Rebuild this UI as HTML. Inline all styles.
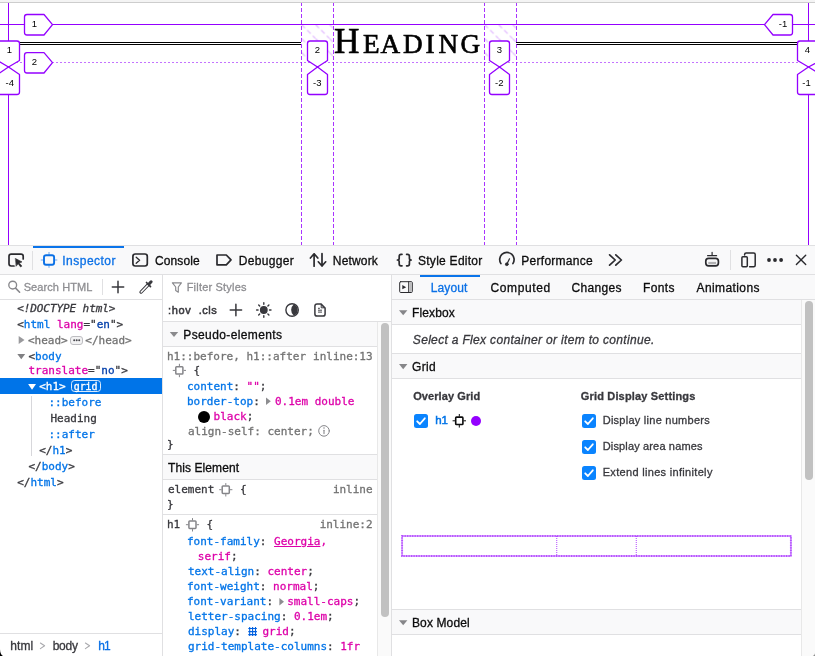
<!DOCTYPE html>
<html lang="en"><head><meta charset="utf-8"><title>Heading - Inspector</title>
<style>
html,body{margin:0;padding:0;}
body{width:815px;height:656px;position:relative;overflow:hidden;background:#fff;font-family:"Liberation Sans",sans-serif;font-size:11px;color:#0c0c0d;}
.abs,.t,#page,#toolbox div,#toolbox svg{position:absolute;}
.t{white-space:pre;line-height:16px;height:16px;-webkit-text-stroke:0.3px currentColor;}
#page{left:0;top:0;width:815px;height:245px;background:#fff;overflow:hidden;}
#page svg{will-change:transform;}
#toolbox{position:absolute;left:0;top:245px;width:815px;height:411px;background:#fff;}
.bd{background:#e0e0e2;}
.bar{background:#f9f9fa;}
.hl{background:#0a74ea;}
.m{font-family:"DejaVu Sans Mono","Liberation Mono",monospace;}
.r{font-family:"Liberation Serif",serif;}
#texts{position:absolute;left:0;top:0;width:815px;height:656px;will-change:transform;}

</style></head>
<body>
<div id="page">
<svg class="abs" style="left:0;top:0" width="815" height="245" viewBox="0 0 815 245" font-family="Liberation Sans, sans-serif">
  <defs>
    <pattern id="hatch" width="14" height="14" patternUnits="userSpaceOnUse" patternTransform="translate(301.5 24.5)">
      <path d="M0,0 L14,14" stroke="#9400ff" stroke-opacity="0.3" stroke-width="1.1" stroke-dasharray="5 3"/>
    </pattern>
    <pattern id="hatch2" width="14" height="14" patternUnits="userSpaceOnUse" patternTransform="translate(484.5 24.5)">
      <path d="M0,0 L14,14" stroke="#9400ff" stroke-opacity="0.3" stroke-width="1.1" stroke-dasharray="5 3"/>
    </pattern>
  </defs>
  <!-- window top edge -->
  <rect x="0" y="0" width="815" height="2" fill="#f4f4f4"/>
  <rect x="0" y="2" width="815" height="1" fill="#cdcdcd"/>
  <!-- h1::before / ::after double rules -->
  <g fill="#000">
    <rect x="8" y="42" width="293" height="1"/><rect x="8" y="44" width="293" height="1"/>
    <rect x="516" y="42" width="292" height="1"/><rect x="516" y="44" width="292" height="1"/>
  </g>
  <!-- heading text -->
  <text x="334.0 363.1 380.6 403.0 425.6 438.4 460.4" y="53.4" fill="#000" stroke="#000" stroke-width="0.65" font-family="Liberation Serif, serif" font-size="27.2"><tspan font-size="35.2">H</tspan>EADING</text>
  <!-- gap hatch -->
  <rect x="301" y="24" width="32" height="38" fill="url(#hatch)"/>
  <rect x="484" y="24" width="32" height="38" fill="url(#hatch2)"/>
  <!-- grid lines -->
  <g stroke="#9400ff" stroke-width="1" fill="none" shape-rendering="crispEdges">
    <line x1="8.5" y1="3" x2="8.5" y2="245"/>
    <line x1="808.5" y1="3" x2="808.5" y2="245"/>
    <line x1="0" y1="24.5" x2="815" y2="24.5"/>
    <g stroke-dasharray="4.3 1.7" stroke-dashoffset="1.4" stroke-opacity="0.8">
      <line x1="301.5" y1="3" x2="301.5" y2="245"/>
      <line x1="333.5" y1="3" x2="333.5" y2="245"/>
      <line x1="484.5" y1="3" x2="484.5" y2="245"/>
      <line x1="516.5" y1="3" x2="516.5" y2="245"/>
    </g>
    <line x1="0" y1="62.5" x2="815" y2="62.5" stroke-dasharray="2 2" stroke-opacity="0.55"/>
  </g>
  <!-- line number labels -->
  <g stroke="#9400ff" stroke-width="1.3" fill="#fff" stroke-linejoin="round">
    <!-- row labels left -->
    <path d="M24.5,17 q0,-2.5 2.5,-2.5 H44 L52.5,24.6 L44,35 H27 q-2.5,0 -2.5,-2.5 Z"/>
    <path d="M24.5,55.2 q0,-2.5 2.5,-2.5 H44 L52.5,62.6 L44,73 H27 q-2.5,0 -2.5,-2.5 Z"/>
    <!-- row label right -->
    <path d="M792.5,17 q0,-2.5 -2.5,-2.5 H773 L764.5,24.6 L773,35 H790 q2.5,0 2.5,-2.5 Z"/>
    <!-- column labels: top (positive) -->
    <path d="M-2.5,43.5 q0,-2.5 2.5,-2.5 H17 q2.5,0 2.5,2.5 V60.5 L8.5,67 L-2.5,60.5 Z"/>
    <path d="M307.5,43.5 q0,-2.5 2.5,-2.5 H325 q2.5,0 2.5,2.5 V60.5 L317.5,67 L307.5,60.5 Z"/>
    <path d="M489.5,43.5 q0,-2.5 2.5,-2.5 H507 q2.5,0 2.5,2.5 V60.5 L499.5,67 L489.5,60.5 Z"/>
    <path d="M797.5,43.5 q0,-2.5 2.5,-2.5 H818 q2.5,0 2.5,2.5 V60.5 L808.5,67 L797.5,60.5 Z"/>
    <!-- column labels: bottom (negative) -->
    <path d="M-2.5,92 q0,2.5 2.5,2.5 H17 q2.5,0 2.5,-2.5 V74.5 L8.5,67 L-2.5,74.5 Z"/>
    <path d="M307.5,92 q0,2.5 2.5,2.5 H325 q2.5,0 2.5,-2.5 V74.5 L317.5,67 L307.5,74.5 Z"/>
    <path d="M489.5,92 q0,2.5 2.5,2.5 H507 q2.5,0 2.5,-2.5 V74.5 L499.5,67 L489.5,74.5 Z"/>
    <path d="M797.5,92 q0,2.5 2.5,2.5 H818 q2.5,0 2.5,-2.5 V74.5 L808.5,67 L797.5,74.5 Z"/>
  </g>
  <g font-size="9.5" fill="#000" text-anchor="middle">
    <text x="34.3" y="27">1</text>
    <text x="34.3" y="65">2</text>
    <text x="783" y="27">-1</text>
    <text x="9.3" y="52.7">1</text>
    <text x="317.3" y="52.7">2</text>
    <text x="499.3" y="52.7">3</text>
    <text x="807.3" y="52.7">4</text>
    <text x="9.8" y="86.3">-4</text>
    <text x="317.3" y="86.3">-3</text>
    <text x="499.3" y="86.3">-2</text>
    <text x="806.5" y="86.3">-1</text>
  </g>
</svg>
</div>
<div id="toolbox">
  <!-- borders and bars (coords relative to toolbox top = 245) -->
  <div class="bd" style="left:0;top:0;width:815px;height:1px"></div>
  <div class="bar" style="left:0;top:1px;width:815px;height:28px"></div>
  <div class="bd" style="left:0;top:29px;width:815px;height:1px"></div>
  <div class="hl" style="left:33px;top:1px;width:91px;height:2px"></div>
  <div class="bd" style="left:32px;top:6px;width:1px;height:19px"></div>
  <div class="bd" style="left:730px;top:5px;width:1px;height:20px"></div>
  <!-- panel toolbars -->
  <div class="bd" style="left:0;top:54px;width:162px;height:1px"></div>
  <div class="bd" style="left:392px;top:54px;width:423px;height:1px"></div>
  <div class="bar" style="left:392px;top:30px;width:423px;height:24px"></div>
  <div class="hl" style="left:420px;top:30px;width:60px;height:2px"></div>
  <div class="bd" style="left:102px;top:34px;width:1px;height:16px"></div>
  <!-- splitters -->
  <div class="bd" style="left:162px;top:30px;width:1px;height:381px"></div>
  <div class="bd" style="left:391px;top:30px;width:1px;height:381px"></div>
  <!-- markup: selected row -->
  <div style="left:0;top:133px;width:162px;height:16px;background:#0074e8"></div>
  <div style="left:71.1px;top:135.1px;width:30px;height:11.8px;border:1px solid rgba(255,255,255,.85);border-radius:3.5px;box-sizing:border-box"></div>
  <div style="left:31px;top:151px;width:1px;height:60px;background:#d7d7db"></div>
  <div style="left:70.3px;top:90.5px;width:11px;height:7.5px;border:1px solid #bdbdc1;border-radius:3px;background:#f2f2f3"></div>
  <!-- breadcrumbs -->
  <div class="bd" style="left:0;top:388px;width:162px;height:1px"></div>
  <!-- rules panel -->
  <div class="bd" style="left:163px;top:76px;width:228px;height:1px"></div>
  <div class="bar" style="left:163px;top:77px;width:214px;height:24px"></div>
  <div class="bd" style="left:163px;top:101px;width:214px;height:1px"></div>
  <div class="bd" style="left:163px;top:209px;width:214px;height:1px"></div>
  <div class="bar" style="left:163px;top:210px;width:214px;height:24px"></div>
  <div class="bd" style="left:163px;top:234px;width:214px;height:1px"></div>
  <div class="bd" style="left:163px;top:269px;width:214px;height:1px"></div>
  <!-- rules scrollbar -->
  <div style="left:377px;top:77px;width:14px;height:334px;background:#fafafa;border-left:1px solid #e8e8e8;box-sizing:border-box"></div>
  <div style="left:381px;top:78px;width:8px;height:294px;background:#c1c1c1;border-radius:4px"></div>
  <!-- swatches -->
  <div style="left:197.5px;top:165.5px;width:12px;height:12px;border-radius:6px;background:#000"></div>
  <!-- layout panel -->
  <div class="bar" style="left:392px;top:55px;width:409px;height:24px"></div>
  <div class="bd" style="left:392px;top:79px;width:409px;height:1px"></div>
  <div class="bd" style="left:392px;top:108px;width:409px;height:1px"></div>
  <div class="bar" style="left:392px;top:109px;width:409px;height:24px"></div>
  <div class="bd" style="left:392px;top:133px;width:409px;height:1px"></div>
  <div class="bd" style="left:392px;top:364px;width:409px;height:1px"></div>
  <div class="bar" style="left:392px;top:365px;width:409px;height:24px"></div>
  <div class="bd" style="left:392px;top:389px;width:409px;height:1px"></div>
  <!-- layout scrollbar -->
  <div style="left:801px;top:55px;width:14px;height:356px;background:#fafafa;border-left:1px solid #e8e8e8;box-sizing:border-box"></div>
  <div style="left:805px;top:56px;width:8px;height:179px;background:#c1c1c1;border-radius:4px"></div>
  <!-- checkboxes -->
  <svg style="left:414px;top:169px" width="14" height="14" viewBox="0 0 14 14"><rect width="14" height="14" rx="2.5" fill="#0a84ff"/><path d="M3.2,7.3 L5.9,10 L10.8,4.3" fill="none" stroke="#fff" stroke-width="1.8" stroke-linecap="round" stroke-linejoin="round"/></svg>
  <svg style="left:582px;top:169px" width="14" height="14" viewBox="0 0 14 14"><rect width="14" height="14" rx="2.5" fill="#0a84ff"/><path d="M3.2,7.3 L5.9,10 L10.8,4.3" fill="none" stroke="#fff" stroke-width="1.8" stroke-linecap="round" stroke-linejoin="round"/></svg>
  <svg style="left:582px;top:195px" width="14" height="14" viewBox="0 0 14 14"><rect width="14" height="14" rx="2.5" fill="#0a84ff"/><path d="M3.2,7.3 L5.9,10 L10.8,4.3" fill="none" stroke="#fff" stroke-width="1.8" stroke-linecap="round" stroke-linejoin="round"/></svg>
  <svg style="left:582px;top:221px" width="14" height="14" viewBox="0 0 14 14"><rect width="14" height="14" rx="2.5" fill="#0a84ff"/><path d="M3.2,7.3 L5.9,10 L10.8,4.3" fill="none" stroke="#fff" stroke-width="1.8" stroke-linecap="round" stroke-linejoin="round"/></svg>
  <div style="left:470.5px;top:170.5px;width:10.5px;height:10.5px;border-radius:6px;background:#9400ff"></div>
  <!-- grid outline -->
  <svg style="left:400px;top:288px" width="394" height="26" viewBox="400 533 394 26"><g fill="none" stroke="#9400ff"><rect x="402.1" y="536" width="388.8" height="20" stroke-width="1.9" stroke-opacity=".38"/><rect x="402.1" y="536" width="388.8" height="20" stroke-width="1.9" stroke-opacity=".5" stroke-dasharray="1.2 1.3"/><path d="M556.7,536 V556 M636.3,536 V556" stroke-width="1.2" stroke-opacity=".6" stroke-dasharray="1 1"/></g></svg>
  <!-- ICONS -->
</div>

<svg class="abs" style="left:0;top:0;pointer-events:none" width="815" height="656" viewBox="0 0 815 656" fill="none" stroke-linecap="round" stroke-linejoin="round">
  <!-- ===== main toolbar ===== -->
  <g stroke="#2a2a2e" stroke-width="1.7">
    <!-- element picker -->
    <path d="M14,266 H11.2 Q9,266 9,263.8 V256.3 Q9,254.1 11.2,254.1 H21 Q23.2,254.1 23.2,256.3 V259"/>
    <path d="M15.6,258.6 L22,261.9 L19.2,262.9 L21.9,266.1 L20.6,267 L18.2,263.8 L16.3,266 Z" fill="#2a2a2e" stroke-width="0.6"/>
    <!-- console -->
    <rect x="132.9" y="254" width="14.4" height="12" rx="2.4"/>
    <path d="M136.2,257.2 L139.6,260.2 L136.2,263.2" stroke-width="1.3"/>
    <!-- debugger -->
    <path d="M217,255 H226.3 L231,259.9 L226.3,264.8 H217 Z"/>
    <!-- network -->
    <path d="M314.1,266.2 V253.8 M310.4,258 L314.1,253.8 L317.8,258 M322,253.6 V266 M318.3,261.8 L322,266 L325.7,261.8"/>
    <!-- style editor braces -->
    <path d="M402,254.3 H401 Q399.2,254.3 399.2,256.2 V258.2 Q399.2,260 397.4,260 Q399.2,260 399.2,261.8 V263.9 Q399.2,265.8 401,265.8 H402"/>
    <path d="M406.6,254.3 H407.6 Q409.4,254.3 409.4,256.2 V258.2 Q409.4,260 411.2,260 Q409.4,260 409.4,261.8 V263.9 Q409.4,265.8 407.6,265.8 H406.6"/>
    <!-- performance -->
    <path d="M500.9,263.6 A7.2,7.2 0 1 1 512.9,263.6"/>
    <path d="M506.9,264 L509.5,258.8" stroke-width="1.2"/>
    <circle cx="506.8" cy="264.2" r="1.5" fill="#2a2a2e" stroke-width="0.6"/>
    <!-- overflow chevrons -->
    <path d="M609.6,254.8 L615.2,260 L609.6,265.2 M615.8,254.8 L621.4,260 L615.8,265.2"/>
    <!-- toolbox mode icon -->
    <rect x="705.8" y="258.3" width="12.6" height="7.6" rx="2.8"/>
    <path d="M712.1,252.3 V255.6 M707.6,255.7 H716.6" stroke-width="1.2"/>
    <rect x="708.3" y="261.9" width="7.8" height="2.4" fill="#b1b1b3" stroke="none"/>
    <!-- responsive design -->
    <path d="M744.6,255 V254.4 Q744.6,252.9 746.1,252.9 H753.7 Q755.2,252.9 755.2,254.4 V265.2 Q755.2,266.7 753.7,266.7 H749.6" stroke-width="1.5"/>
    <rect x="741.9" y="256.8" width="5.4" height="10" rx="1" stroke-width="1.5"/>
    <!-- close -->
    <path d="M796.4,255.3 L805.7,264.6 M805.7,255.3 L796.4,264.6" stroke-width="1.4"/>
  </g>
  <g fill="#2a2a2e"><circle cx="769" cy="260" r="1.9"/><circle cx="775" cy="260" r="1.9"/><circle cx="781.1" cy="260" r="1.9"/></g>
  <!-- inspector (selected, blue) -->
  <g stroke="#0a70e6">
    <rect x="44" y="255.3" width="10.1" height="9.5" rx="2" stroke-width="1.9"/>
    <path d="M49,252.4 V254.4 M49,265.7 V267.4 M41.2,260 H43 M55.1,260 H56.9" stroke-width="1" stroke-opacity=".6"/>
  </g>
  <!-- ===== markup toolbar ===== -->
  <g stroke="#88888c" stroke-width="1.35">
    <circle cx="12.7" cy="285.1" r="3.9"/>
    <path d="M15.6,288.1 L19.6,292.2" stroke-width="1.6"/>
  </g>
  <g stroke="#38383d" stroke-width="1.5">
    <path d="M112.3,287 H123.7 M118,281.3 V292.7"/>
  </g>
  <!-- eyedropper -->
  <g stroke="#38383d">
    <path d="M141,292.1 L147.9,285" stroke-width="3.3"/>
    <path d="M141.2,291.9 L148.2,284.7" stroke="#fff" stroke-width="1.5"/>
    <path d="M146.5,282.5 L150.5,286.6" stroke-width="1.7"/>
    <path d="M148.8,284.2 L151.1,281.8" stroke-width="3.1"/>
  </g>
  <!-- ===== rules toolbar ===== -->
  <path d="M172.4,282.8 H181.4 L178.3,287 V292.2 L175.7,290.6 V287 Z" stroke="#88888c" stroke-width="1.15"/>
  <g stroke="#38383d" stroke-width="1.5">
    <path d="M230.2,310 H241.6 M235.9,304.3 V315.7"/>
    <!-- sun -->
    <circle cx="263.8" cy="310" r="3.3" fill="#38383d" stroke-width="1.2"/>
    <path d="M263.8,302.8 V304.3 M263.8,315.7 V317.2 M256.6,310 H258.1 M269.5,310 H271 M258.7,304.9 L259.7,305.9 M267.9,314.1 L268.9,315.1 M258.7,315.1 L259.7,314.1 M267.9,305.9 L268.9,304.9" stroke-width="1.4"/>
    <!-- contrast moon -->
    <circle cx="292.1" cy="310" r="6.2" stroke-width="1.4"/>
    <path d="M293.6,304.6 A5.6,5.6 0 0 1 293.6,315.4 A7.2,7.2 0 0 1 293.6,304.6 Z" fill="#38383d" stroke="none"/>
    <!-- print/doc -->
    <path d="M317.1,303.9 H320.9 L325.1,308.1 V313.9 Q325.1,316.1 322.9,316.1 H317.1 Q314.9,316.1 314.9,313.9 V306.1 Q314.9,303.9 317.1,303.9 Z" stroke-width="1.5"/>
    <path d="M321.2,305.2 V307.8 H323.9" stroke-width="1"/>
    <path d="M318,308.3 H319.9 M318,310.2 H322 M318,312.1 H322" stroke-width="0.95" stroke-linecap="butt"/>
  </g>
  <!-- ===== markup twisties ===== -->
  <path d="M18.7,336.1 L24.5,340 L18.7,343.9 Z" fill="#9a9a9d" stroke="none"/>
  <path d="M17.3,354 H25.2 L21.25,359.3 Z" fill="#808083" stroke="none"/>
  <path d="M28.1,384.1 H36 L32.05,389.8 Z" fill="#ffffff" stroke="none"/>
  <g fill="#4a4a4f"><circle cx="74.2" cy="340.2" r="1"/><circle cx="76.7" cy="340.2" r="1"/><circle cx="79.2" cy="340.2" r="1"/></g>
  <!-- breadcrumb chevrons -->
  <g stroke="#a9a9ad" stroke-width="1.1"><path d="M40.4,643 L44.6,645.8 L40.4,648.6 M85.4,643 L89.6,645.8 L85.4,648.6"/></g>
  <!-- ===== rules panel small icons ===== -->
  <path d="M169.8,331.9 H178.2 L174,336.9 Z" fill="#8a8a8d" stroke="none"/>
  <!-- selector highlighter crosshairs -->
  <g stroke="#858589">
    <rect x="175.8" y="366.7" width="7.1" height="7.4" rx="0.8" stroke-width="1.5"/>
    <path d="M179.4,364.2 V365.8 M179.4,375.2 V376.8 M173.2,370.4 H174.8 M184,370.4 H185.6" stroke-width="1"/>
    <rect x="222.2" y="486" width="7.1" height="7.4" rx="0.8" stroke-width="1.5"/>
    <path d="M225.8,483.5 V485.1 M225.8,494.5 V496.1 M219.6,489.7 H221.2 M230.4,489.7 H232" stroke-width="1"/>
    <rect x="188.9" y="521" width="7.1" height="7.4" rx="0.8" stroke-width="1.5"/>
    <path d="M192.5,518.5 V520.1 M192.5,529.5 V531.1 M186.3,524.7 H187.9 M197.1,524.7 H198.7" stroke-width="1"/>
  </g>
  <!-- expander triangles -->
  <path d="M266,397.5 L270.8,401.3 L266,405.1 Z" fill="#8d8d90" stroke="none"/>
  <path d="M279.4,598 L284,601.8 L279.4,605.6 Z" fill="#8d8d90" stroke="none"/>
  <!-- info icon -->
  <g stroke="#858589"><circle cx="324" cy="430.9" r="5.3" stroke-width="1"/><path d="M324,430.3 V433.6" stroke-width="1.1"/></g>
  <circle cx="324" cy="428.1" r="0.75" fill="#858589"/>
  <!-- grid icon -->
  <path d="M248.3,628.5 H256.9 M248.3,631.6 H256.9 M248.3,634.6 H256.9 M249.7,627.1 V636 M252.6,627.1 V636 M255.5,627.1 V636" stroke="#0060df" stroke-width="1.1" stroke-linecap="butt"/>
  <!-- ===== layout panel ===== -->
  <g stroke="#2a2a2e" stroke-width="1"><rect x="399.7" y="281.7" width="12.6" height="10.8" rx="1"/><path d="M408.7,281.7 V292.5"/></g>
  <rect x="409.3" y="282.3" width="2.5" height="9.6" fill="#bcbcbe"/>
  <path d="M402.3,285 L406.2,287.15 L402.3,289.3 Z" fill="#2a2a2e"/>
  <path d="M399,310.2 H407.4 L403.2,315.3 Z" fill="#868689"/>
  <path d="M399,364.1 H407.4 L403.2,369.2 Z" fill="#868689"/>
  <path d="M399,620.2 H407.4 L403.2,625.3 Z" fill="#868689"/>
  <!-- overlay grid crosshair (dark) -->
  <g stroke="#0c0c0d">
    <rect x="455.7" y="417.1" width="7.2" height="7.4" rx="0.8" stroke-width="1.6"/>
    <path d="M459.3,414.4 V416.2 M459.3,425.4 V427.2 M453,420.8 H454.8 M463.8,420.8 H465.6" stroke-width="1"/>
  </g>
</svg>

<svg class="abs" style="left:0;top:646px" width="815" height="10" viewBox="0 646 815 10"><path d="M0,649.3 C0.2,653 1,655 3,656 H0 Z" fill="#000"/><path d="M815,653.3 C814.7,654.8 814,655.6 812.8,656 H815 Z" fill="#8a8a8a"/></svg>

<div id="texts">
<span class="t" style="left:62.30px;top:253px;font-size:12px;color:#0a70e6;letter-spacing:0.480px;">Inspector</span>
<span class="t" style="left:155.00px;top:253px;font-size:12px;color:#0c0c0d;letter-spacing:0.108px;">Console</span>
<span class="t" style="left:238.70px;top:253px;font-size:12px;color:#0c0c0d;letter-spacing:0.327px;">Debugger</span>
<span class="t" style="left:332.80px;top:253px;font-size:12px;color:#0c0c0d;letter-spacing:0.165px;">Network</span>
<span class="t" style="left:418.00px;top:253px;font-size:12px;color:#0c0c0d;letter-spacing:0.267px;">Style Editor</span>
<span class="t" style="left:521.30px;top:253px;font-size:12px;color:#0c0c0d;letter-spacing:0.268px;">Performance</span>
<span class="t" style="left:23.70px;top:279px;font-size:11px;color:#8e8e92;letter-spacing:0.076px;">Search HTML</span>
<span class="t m" style="left:17.20px;top:301px;font-size:11px;color:#38383d;font-style:italic;letter-spacing:-0.080px;">&lt;!DOCTYPE html&gt;</span>
<span class="t m" style="left:17.20px;top:317px;font-size:11px;color:#38383d;">&lt;</span>
<span class="t m" style="left:23.82px;top:317px;font-size:11px;color:#0074e8;">html</span>
<span class="t m" style="left:50.30px;top:317px;font-size:11px;color:#38383d;"> </span>
<span class="t m" style="left:56.92px;top:317px;font-size:11px;color:#dd00a9;">lang</span>
<span class="t m" style="left:83.40px;top:317px;font-size:11px;color:#38383d;">=&quot;</span>
<span class="t m" style="left:96.64px;top:317px;font-size:11px;color:#003eaa;">en</span>
<span class="t m" style="left:109.88px;top:317px;font-size:11px;color:#38383d;">&quot;&gt;</span>
<span class="t m" style="left:27.90px;top:333px;font-size:11px;color:#737373;">&lt;head&gt;</span>
<span class="t m" style="left:85.30px;top:333px;font-size:11px;color:#737373;">&lt;/head&gt;</span>
<span class="t m" style="left:28.50px;top:349px;font-size:11px;color:#38383d;">&lt;</span>
<span class="t m" style="left:35.12px;top:349px;font-size:11px;color:#0074e8;">body</span>
<span class="t m" style="left:28.50px;top:363px;font-size:11px;color:#dd00a9;">translate</span>
<span class="t m" style="left:88.08px;top:363px;font-size:11px;color:#38383d;">=&quot;</span>
<span class="t m" style="left:101.32px;top:363px;font-size:11px;color:#003eaa;">no</span>
<span class="t m" style="left:114.56px;top:363px;font-size:11px;color:#38383d;">&quot;&gt;</span>
<span class="t m" style="left:39.20px;top:379px;font-size:11px;color:#ffffff;">&lt;h1&gt;</span>
<span class="t m" style="left:73.80px;top:379px;font-size:10px;color:#ffffff;letter-spacing:-0.154px;">grid</span>
<span class="t m" style="left:48.50px;top:395px;font-size:11px;color:#0074e8;">::before</span>
<span class="t m" style="left:50.50px;top:411px;font-size:11px;color:#38383d;">Heading</span>
<span class="t m" style="left:48.50px;top:427px;font-size:11px;color:#0074e8;">::after</span>
<span class="t m" style="left:39.20px;top:443px;font-size:11px;color:#38383d;">&lt;/</span>
<span class="t m" style="left:52.44px;top:443px;font-size:11px;color:#0074e8;">h1</span>
<span class="t m" style="left:65.68px;top:443px;font-size:11px;color:#38383d;">&gt;</span>
<span class="t m" style="left:28.50px;top:459px;font-size:11px;color:#38383d;">&lt;/</span>
<span class="t m" style="left:41.74px;top:459px;font-size:11px;color:#0074e8;">body</span>
<span class="t m" style="left:68.22px;top:459px;font-size:11px;color:#38383d;">&gt;</span>
<span class="t m" style="left:17.20px;top:475px;font-size:11px;color:#38383d;">&lt;/</span>
<span class="t m" style="left:30.44px;top:475px;font-size:11px;color:#0074e8;">html</span>
<span class="t m" style="left:56.92px;top:475px;font-size:11px;color:#38383d;">&gt;</span>
<span class="t" style="left:10.20px;top:638px;font-size:12px;color:#38383d;letter-spacing:0.099px;">html</span>
<span class="t" style="left:52.70px;top:638px;font-size:12px;color:#38383d;letter-spacing:-0.274px;">body</span>
<span class="t" style="left:98.30px;top:638px;font-size:12px;color:#0a70e6;letter-spacing:-0.9px;">h1</span>
<span class="t" style="left:186.70px;top:279px;font-size:11px;color:#8e8e92;letter-spacing:0.195px;">Filter Styles</span>
<span class="t" style="left:167.90px;top:302px;font-size:11px;color:#38383d;-webkit-text-stroke-width:0.5px;letter-spacing:0.703px;">:hov</span>
<span class="t" style="left:198.70px;top:302px;font-size:11px;color:#38383d;-webkit-text-stroke-width:0.5px;letter-spacing:0.533px;">.cls</span>
<span class="t" style="left:183.30px;top:327px;font-size:12px;color:#0c0c0d;letter-spacing:0.380px;">Pseudo-elements</span>
<span class="t" style="left:168.00px;top:460px;font-size:12px;color:#0c0c0d;letter-spacing:0.092px;">This Element</span>
<span class="t m" style="left:167.00px;top:349px;font-size:11px;color:#737373;">h1::before, h1::after</span>
<span class="t m" style="left:313.02px;top:349px;font-size:11px;color:#737373;">inline:13</span>
<span class="t m" style="left:193.60px;top:363px;font-size:11px;color:#38383d;">{</span>
<span class="t m" style="left:187.00px;top:379px;font-size:11px;color:#0074e8;">content</span>
<span class="t m" style="left:233.34px;top:379px;font-size:11px;color:#38383d;">: </span>
<span class="t m" style="left:246.58px;top:379px;font-size:11px;color:#dd00a9;">&quot;&quot;</span>
<span class="t m" style="left:259.82px;top:379px;font-size:11px;color:#38383d;">;</span>
<span class="t m" style="left:187.00px;top:394px;font-size:11px;color:#0074e8;">border-top</span>
<span class="t m" style="left:253.20px;top:394px;font-size:11px;color:#38383d;">:</span>
<span class="t m" style="left:275.00px;top:394px;font-size:11px;color:#dd00a9;">0.1em double</span>
<span class="t m" style="left:213.60px;top:409px;font-size:11px;color:#dd00a9;">black</span>
<span class="t m" style="left:246.70px;top:409px;font-size:11px;color:#38383d;">;</span>
<span class="t m" style="left:188.00px;top:424px;font-size:11px;color:#737373;">align-self: center;</span>
<span class="t m" style="left:167.00px;top:437px;font-size:11px;color:#38383d;">}</span>
<span class="t m" style="left:168.00px;top:482px;font-size:11px;color:#38383d;">element</span>
<span class="t m" style="left:240.00px;top:482px;font-size:11px;color:#38383d;">{</span>
<span class="t m" style="left:332.88px;top:482px;font-size:11px;color:#737373;">inline</span>
<span class="t m" style="left:167.00px;top:497px;font-size:11px;color:#38383d;">}</span>
<span class="t m" style="left:167.00px;top:517px;font-size:11px;color:#38383d;">h1</span>
<span class="t m" style="left:206.50px;top:517px;font-size:11px;color:#38383d;">{</span>
<span class="t m" style="left:319.64px;top:517px;font-size:11px;color:#737373;">inline:2</span>
<span class="t m" style="left:187.00px;top:534px;font-size:11px;color:#0074e8;">font-family</span>
<span class="t m" style="left:259.82px;top:534px;font-size:11px;color:#38383d;">: </span>
<span class="t m" style="left:274.06px;top:534px;font-size:11px;color:#dd00a9;text-decoration:underline;">Georgia</span>
<span class="t m" style="left:320.40px;top:534px;font-size:11px;color:#dd00a9;">,</span>
<span class="t m" style="left:197.80px;top:549px;font-size:11px;color:#dd00a9;">serif</span>
<span class="t m" style="left:230.90px;top:549px;font-size:11px;color:#38383d;">;</span>
<span class="t m" style="left:188.00px;top:564px;font-size:11px;color:#0074e8;">text-align</span>
<span class="t m" style="left:254.20px;top:564px;font-size:11px;color:#38383d;">: </span>
<span class="t m" style="left:267.44px;top:564px;font-size:11px;color:#dd00a9;">center</span>
<span class="t m" style="left:307.16px;top:564px;font-size:11px;color:#38383d;">;</span>
<span class="t m" style="left:187.00px;top:579px;font-size:11px;color:#0074e8;">font-weight</span>
<span class="t m" style="left:259.82px;top:579px;font-size:11px;color:#38383d;">: </span>
<span class="t m" style="left:273.06px;top:579px;font-size:11px;color:#dd00a9;">normal</span>
<span class="t m" style="left:312.78px;top:579px;font-size:11px;color:#38383d;">;</span>
<span class="t m" style="left:187.00px;top:594px;font-size:11px;color:#0074e8;">font-variant</span>
<span class="t m" style="left:266.44px;top:594px;font-size:11px;color:#38383d;">:</span>
<span class="t m" style="left:287.20px;top:594px;font-size:11px;color:#dd00a9;">small-caps</span>
<span class="t m" style="left:353.40px;top:594px;font-size:11px;color:#38383d;">;</span>
<span class="t m" style="left:188.00px;top:609px;font-size:11px;color:#0074e8;">letter-spacing</span>
<span class="t m" style="left:280.68px;top:609px;font-size:11px;color:#38383d;">: </span>
<span class="t m" style="left:293.92px;top:609px;font-size:11px;color:#dd00a9;">0.1em</span>
<span class="t m" style="left:327.02px;top:609px;font-size:11px;color:#38383d;">;</span>
<span class="t m" style="left:188.00px;top:624px;font-size:11px;color:#0074e8;">display</span>
<span class="t m" style="left:234.34px;top:624px;font-size:11px;color:#38383d;">:</span>
<span class="t m" style="left:262.50px;top:624px;font-size:11px;color:#dd00a9;">grid</span>
<span class="t m" style="left:288.98px;top:624px;font-size:11px;color:#38383d;">;</span>
<span class="t m" style="left:188.00px;top:639px;font-size:11px;color:#0074e8;">grid-template-columns</span>
<span class="t m" style="left:327.02px;top:639px;font-size:11px;color:#38383d;">: </span>
<span class="t m" style="left:340.26px;top:639px;font-size:11px;color:#dd00a9;">1fr</span>
<span class="t" style="left:430.80px;top:280px;font-size:12px;color:#0a70e6;letter-spacing:0.101px;">Layout</span>
<span class="t" style="left:490.50px;top:280px;font-size:12px;color:#0c0c0d;letter-spacing:0.616px;">Computed</span>
<span class="t" style="left:571.50px;top:280px;font-size:12px;color:#0c0c0d;letter-spacing:0.327px;">Changes</span>
<span class="t" style="left:643.00px;top:280px;font-size:12px;color:#0c0c0d;letter-spacing:0.372px;">Fonts</span>
<span class="t" style="left:696.50px;top:280px;font-size:12px;color:#0c0c0d;letter-spacing:0.404px;">Animations</span>
<span class="t" style="left:412.00px;top:305px;font-size:12px;color:#0c0c0d;letter-spacing:0.114px;">Flexbox</span>
<span class="t" style="left:412.80px;top:332px;font-size:12px;color:#38383d;font-style:italic;letter-spacing:0.328px;">Select a Flex container or item to continue.</span>
<span class="t" style="left:412.00px;top:359px;font-size:12px;color:#0c0c0d;letter-spacing:0.335px;">Grid</span>
<span class="t" style="left:413.20px;top:388px;font-size:11px;color:#38383d;font-weight:700;letter-spacing:0.090px;">Overlay Grid</span>
<span class="t" style="left:580.80px;top:388px;font-size:11px;color:#38383d;font-weight:700;letter-spacing:0.164px;">Grid Display Settings</span>
<span class="t" style="left:435.20px;top:412px;font-size:11.5px;color:#0074e8;-webkit-text-stroke-width:0.5px;">h1</span>
<span class="t" style="left:602.70px;top:412px;font-size:11px;color:#38383d;letter-spacing:0.258px;">Display line numbers</span>
<span class="t" style="left:602.70px;top:438px;font-size:11px;color:#38383d;letter-spacing:0.152px;">Display area names</span>
<span class="t" style="left:602.70px;top:464px;font-size:11px;color:#38383d;letter-spacing:0.317px;">Extend lines infinitely</span>
<span class="t" style="left:412.00px;top:615px;font-size:12px;color:#0c0c0d;letter-spacing:0.121px;">Box Model</span>
</div>
</body></html>
